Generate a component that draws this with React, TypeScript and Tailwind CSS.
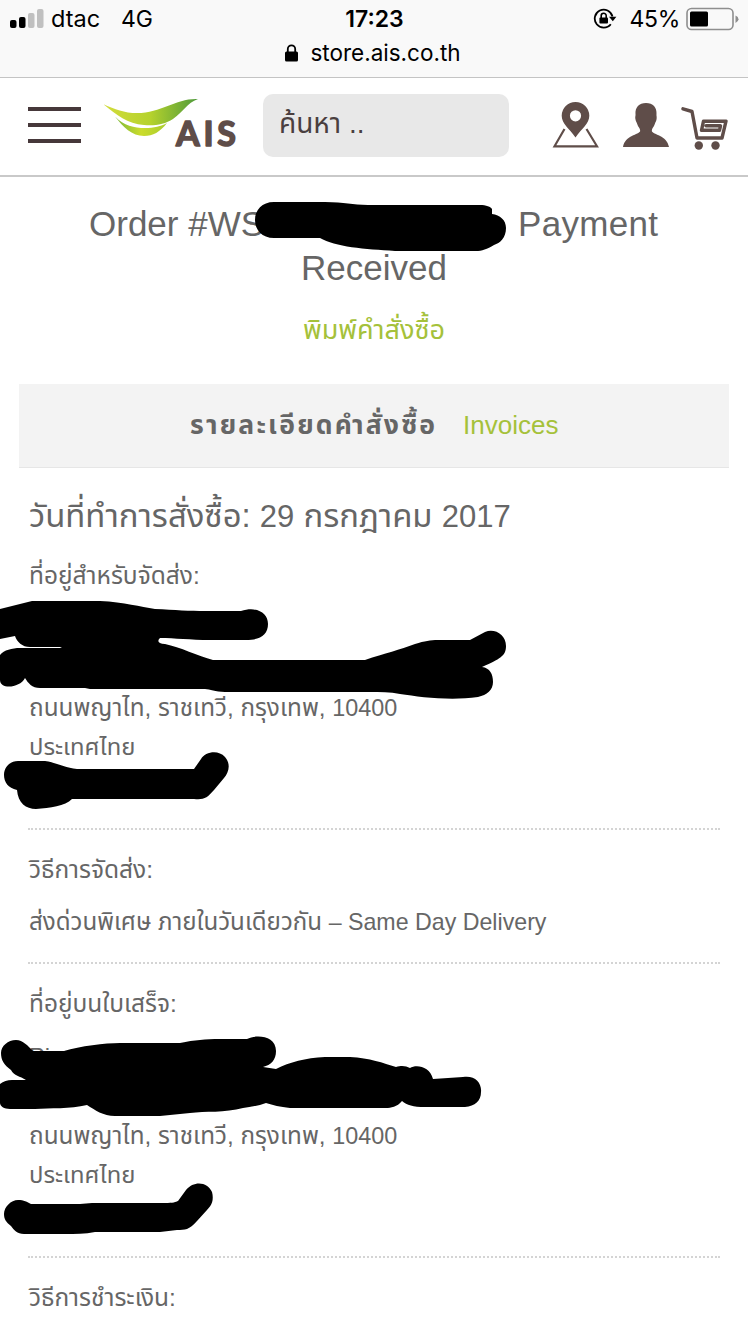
import React from "react";
import clsx from "clsx";

const BROWN = "#5f4d49";

function StatusBar() {
    return (
        <div className="h-[78px] bg-[#f9f9f9] border-b border-[#c4c4c4] text-black font-[Inter,'Liberation_Sans',sans-serif]">
            <div className="h-[38px] pl-[10px] pr-[9px] grid grid-cols-[1fr_auto_1fr] items-center leading-[38px]">
                <div className="flex items-center">
                    <svg width="34" height="20" viewBox="0 0 34 20">
                        <rect x="0" y="11" width="6.5" height="8" rx="2" fill="#000" />
                        <rect x="9" y="8" width="6.5" height="11" rx="2" fill="#000" />
                        <rect x="18" y="4" width="6.5" height="15" rx="2" fill="#c0c0c0" />
                        <rect x="27" y="0" width="6.5" height="19" rx="2" fill="#c0c0c0" />
                    </svg>
                    <span className="ml-[7px] w-[70px] text-[23.5px]">dtac</span>
                    <span className="text-[23px]">4G</span>
                </div>
                <span className="text-[23px] font-semibold">17:23</span>
                <div className="flex items-center justify-end">
                    {/* rotation lock */}
                    <svg width="24" height="22" viewBox="0 0 24 22" className="mr-[12px]">
                        <path d="M17.8 16.2A9 9 0 1 1 19.5 8.5" fill="none" stroke="#000" strokeWidth="1.8" />
                        <path d="M16 8.8h7.4L19.8 13.2z" fill="#000" />
                        <rect x="6.4" y="9.4" width="8.6" height="6" rx="1" fill="#000" />
                        <path d="M8.2 10V7.8a2.5 2.5 0 0 1 5 0V10" fill="none" stroke="#000" strokeWidth="1.6" />
                    </svg>
                    <span className="text-[23px] tracking-[-0.3px]">45%</span>
                    <svg width="53" height="24" viewBox="0 0 53 24" className="ml-[6px]">
                        <rect x="1" y="1.5" width="46" height="21" rx="4.5" fill="none" stroke="#8e8e8e" strokeWidth="1.6" />
                        <rect x="4" y="4.5" width="18" height="15" rx="1.5" fill="#000" />
                        <path d="M49.5 8.5q3 1.2 3 3.7t-3 3.7z" fill="#8e8e8e" />
                    </svg>
                </div>
            </div>
            <div className="h-[30px] flex items-center justify-center gap-[12px] pr-[2px] text-[22.5px]">
                <svg width="13" height="18" viewBox="0 0 13 18">
                    <rect x="0" y="7.5" width="13" height="10" rx="1.5" fill="#000" />
                    <path d="M2.8 8.5V5a3.7 3.7 0 0 1 7.4 0v3.5" fill="none" stroke="#000" strokeWidth="1.8" />
                </svg>
                <span>store.ais.co.th</span>
            </div>
        </div>
    );
}

function Logo() {
    return (
        <svg width="136" height="56" viewBox="0 0 136 56">
            <defs>
                <linearGradient id="leaf" x1="0" y1="0" x2="1" y2="0">
                    <stop offset="0" stopColor="#d3dc3c" />
                    <stop offset="0.5" stopColor="#b5d22c" />
                    <stop offset="1" stopColor="#4f9a3c" />
                </linearGradient>
                <linearGradient id="leafLow" x1="0" y1="0" x2="1" y2="0">
                    <stop offset="0" stopColor="#7cb83a" />
                    <stop offset="0.5" stopColor="#cbdc2c" />
                    <stop offset="1" stopColor="#a9cd2e" />
                </linearGradient>
            </defs>
            <path d="M-1 7C10 12 20 16 33 16C58 16 72 1 94 2C83 6 79 15 69 22C61 27.5 50 29 40 28C23 27 12 17 -1 7Z" fill="url(#leaf)" />
            <path d="M11 19.5C20 29 30 31 41 31C50 31 57 29.5 63 26C56 35 49 39 40 39C28 39 19 30 11 19.5Z" fill="url(#leafLow)" />
            <text
                x="72"
                y="49"
                fill={BROWN}
                stroke={BROWN}
                strokeWidth="1.6"
                strokeLinejoin="round"
                textLength="60"
                className="text-[34px] font-bold font-[Lato,'Liberation_Sans',sans-serif]"
            >
                AIS
            </text>
        </svg>
    );
}

function Header() {
    return (
        <header className="h-[99px] border-b-2 border-[#c9c9c9] bg-white flex items-start">
            <button className="ml-[28px] mt-[29px] w-[53px] h-[36px] flex flex-col justify-between">
                <span className="w-full h-[4px] bg-[#46383a]" />
                <span className="w-full h-[4px] bg-[#46383a]" />
                <span className="w-full h-[4px] bg-[#46383a]" />
            </button>
            <div className="ml-[23px] mt-[19px] w-[136px]">
                <Logo />
            </div>
            <div className="ml-[23px] mt-[16px] w-[246px] h-[63px] rounded-[10px] bg-[#e8e8e8] px-[16px] text-[#4a3f3f] text-[28px] leading-[60px] whitespace-nowrap">
                ค้นหา ..
            </div>
            <div className="flex mt-[22px] ml-[43px]">
                <svg width="48" height="50" viewBox="0 0 48 50">
                    <path d="M12.5 29L2.5 46.3H45L34.5 29" fill="none" stroke={BROWN} strokeWidth="2.2" />
                    <path
                        d="M23.5 2a13.8 13.8 0 0 1 13.8 13.8c0 8-7.5 12.5-13.8 21.7c-6.3-9.2-13.8-13.7-13.8-21.7A13.8 13.8 0 0 1 23.5 2zM23.5 10.2a5.6 5.6 0 1 0 0 11.2a5.6 5.6 0 1 0 0-11.2z"
                        fill={BROWN}
                        fillRule="evenodd"
                    />
                </svg>
                <svg width="48" height="50" viewBox="0 0 48 50" className="ml-[22px]">
                    <path
                        d="M24 3C31 3 35 7.5 34.5 14C34.3 16 35 16 34.6 19C34.3 21.5 33.3 22 32.8 24C32 27 29.8 28 29.8 31C31 35 45 35 47 47H1C3 35 17 35 18.2 31C18.2 28 16 27 15.2 24C14.7 22 13.7 21.5 13.4 19C13 16 13.7 16 13.5 14C13 7.5 17 3 24 3Z"
                        fill={BROWN}
                    />
                </svg>
                <svg width="50" height="50" viewBox="0 0 50 50" className="ml-[8px]">
                    <path d="M5 8.8L14 11.5L19 38H44L48 21.2H25.5L23.5 30.3H41.5L42.5 25.8H28" fill="none" stroke={BROWN} strokeWidth="3.4" strokeLinejoin="round" strokeLinecap="round" />
                    <circle cx="20.8" cy="45.5" r="4.2" fill={BROWN} />
                    <circle cx="37.5" cy="45.5" r="4.2" fill={BROWN} />
                </svg>
            </div>
        </header>
    );
}

// Thick black marker strokes hiding the customer's details
function Redactions() {
    return (
        <svg width="748" height="1330" viewBox="0 0 748 1330" className="absolute top-0 left-0 pointer-events-none">
            <path d="M274 202H325C345 202 352 205 368 205H480C486 205 491 207 492 209V214C500 215 506 220 506 228C506 238 500 243 494 245C487 249 482 251 476 251H395C365 249 335 247 320 238H274C262 238 255 230 255 220C255 210 262 202 274 202Z" />
            <path d="M0 609L32 601H100C125 602 140 607 155 609C175 610 190 611 205 611H241C257 606 268 613 268 624C268 635 260 640 246 640H210C190 640 175 638 160 638Q155 643 165 644C180 647 198 656 213 660H365C385 653 400 650 415 644C425 641 430 640 438 640H470L485 632C495 628 506 635 506 646C506 656 500 659 482 667C490 668 493 674 493 682C493 690 487 695 478 697C450 701 420 697 400 694C390 692 380 692 370 692H225C215 692 210 689 205 689H90L85 688H40C32 688 28 683 25 678C20 688 0 690 0 680V655C4 650 12 648 20 648H60L62 647H30C22 647 17 642 15 636L0 639Z" />
            <path d="M18 761H45C58 763 65 768 77 769H194L201 759C205 752 218 749 225 757C231 764 229 772 224 778L214 790C207 798 204 800 194 799H72C65 806 50 808 36 809C26 809 18 803 17 790C8 788 4 782 4 775C4 767 10 761 18 761Z" />
            <path d="M16 1040C23 1040 28 1046 33 1051H64C80 1046 105 1043 120 1043H180C195 1040 205 1039 220 1039H247C257 1034 276 1036 276 1051C276 1060 271 1065 263 1067L276 1069C290 1062 305 1058 325 1057H350C370 1058 383 1063 396 1067C402 1065 406 1066 410 1068C416 1064 430 1066 433 1079L463 1077C475 1075 482 1083 481 1092C481 1101 475 1106 465 1107H425C413 1107 407 1105 402 1101C397 1107 391 1108 386 1108H290C280 1107 273 1105 266 1103C258 1106 250 1107 243 1108C225 1113 205 1111 190 1113L160 1116H115C103 1116 95 1110 87 1105C70 1109 50 1108 35 1109H10C4 1109 0 1106 0 1103V1084Q5 1080 12 1080H26C20 1076 14 1076 11 1070C4 1065 1 1060 1 1053C1 1046 8 1040 16 1040Z" />
            <path d="M18 1200C24 1200 27 1202 31 1204H80L92 1203H165C173 1203 176 1202 178 1201L186 1190C194 1180 208 1182 212 1192C214 1200 212 1205 207 1210L197 1221C189 1230 185 1230 177 1230L160 1232H95C85 1234 75 1234 65 1234H24C17 1234 14 1230 11 1226C6 1222 4 1219 4 1214C4 1207 11 1200 18 1200Z" />
        </svg>
    );
}

function Section({ title, last, children }: {
    title: string;
    last?: boolean;
    children?: React.ReactNode;
}) {
    return (
        <section className={clsx("mx-[28px] pl-px whitespace-nowrap", !last && "border-b-2 border-dotted border-[#d4d4d4]")}>
            <h3 className="h-[40px] leading-[41px] text-[24.5px]">{title}</h3>
            {children}
        </section>
    );
}

function Address({ name, street }: { name?: string; street?: string }) {
    return (
        <div className="mt-[13px] mb-[21px] h-[199px] leading-[39.8px]">
            <p className="h-[39.8px] leading-[42px]">{name}</p>
            <p className="h-[39.8px] leading-[43px] pl-[302px]">{street}</p>
            <p className="h-[39.8px] text-[24.3px]">
                ถนนพญาไท, ราชเทวี, กรุงเทพ, <span className="text-[23.4px]">10400</span>
            </p>
            <p className="h-[39.8px]">ประเทศไทย</p>
        </div>
    );
}

export default function App() {
    return (
        <div className="relative w-[748px] h-[1330px] overflow-hidden bg-white text-[#666666] text-[23.8px] font-['Liberation_Sans','Noto_Sans_Thai',sans-serif]">
            <StatusBar />
            <Header />

            <h1 className="mt-[25px] h-[88px] text-[35px] leading-[44px] whitespace-nowrap">
                <span className="flex pl-[89px]">
                    <span className="w-[429px]">Order #WS</span>
                    <span className="tracking-[0.3px]">Payment</span>
                </span>
                <span className="block text-center">Received</span>
            </h1>
            <a className="mt-[20px] block h-[40px] leading-[40px] text-center text-[27px] text-[#a5c13a]">พิมพ์คำสั่งซื้อ</a>

            <nav className="mt-[34px] mx-[19px] h-[84px] bg-[#f3f3f3] border-b border-[#e6e6e6] flex pl-[171px] leading-[82px] whitespace-nowrap">
                <span className="w-[273px] font-bold text-[26.5px] tracking-[2.2px]">รายละเอียดคำสั่งซื้อ</span>
                <span className="text-[26px] text-[#a5c13a]">Invoices</span>
            </nav>

            <h2 className="mt-[28px] mb-[19px] h-[40px] pl-[29px] text-[32.9px] leading-[40px] whitespace-nowrap">
                วันที่ทำการสั่งซื้อ: <span className="text-[31px]">29</span> กรกฎาคม <span className="text-[31px]">2017</span>
            </h2>

            <Section title="ที่อยู่สำหรับจัดส่ง:">
                <Address street="Pi" />
            </Section>
            <div className="h-[19px]" />
            <Section title="วิธีการจัดส่ง:">
                <p className="mt-[13px] mb-[20px] h-[40px] leading-[40px] text-[24.1px]">
                    ส่งด่วนพิเศษ ภายในวันเดียวกัน <span className="text-[23.2px]">– Same Day Delivery</span>
                </p>
            </Section>
            <div className="h-[19px]" />
            <Section title="ที่อยู่บนใบเสร็จ:">
                <Address name="Pi" />
            </Section>
            <div className="h-[19px]" />
            <Section title="วิธีการชำระเงิน:" last />

            <Redactions />
        </div>
    );
}
